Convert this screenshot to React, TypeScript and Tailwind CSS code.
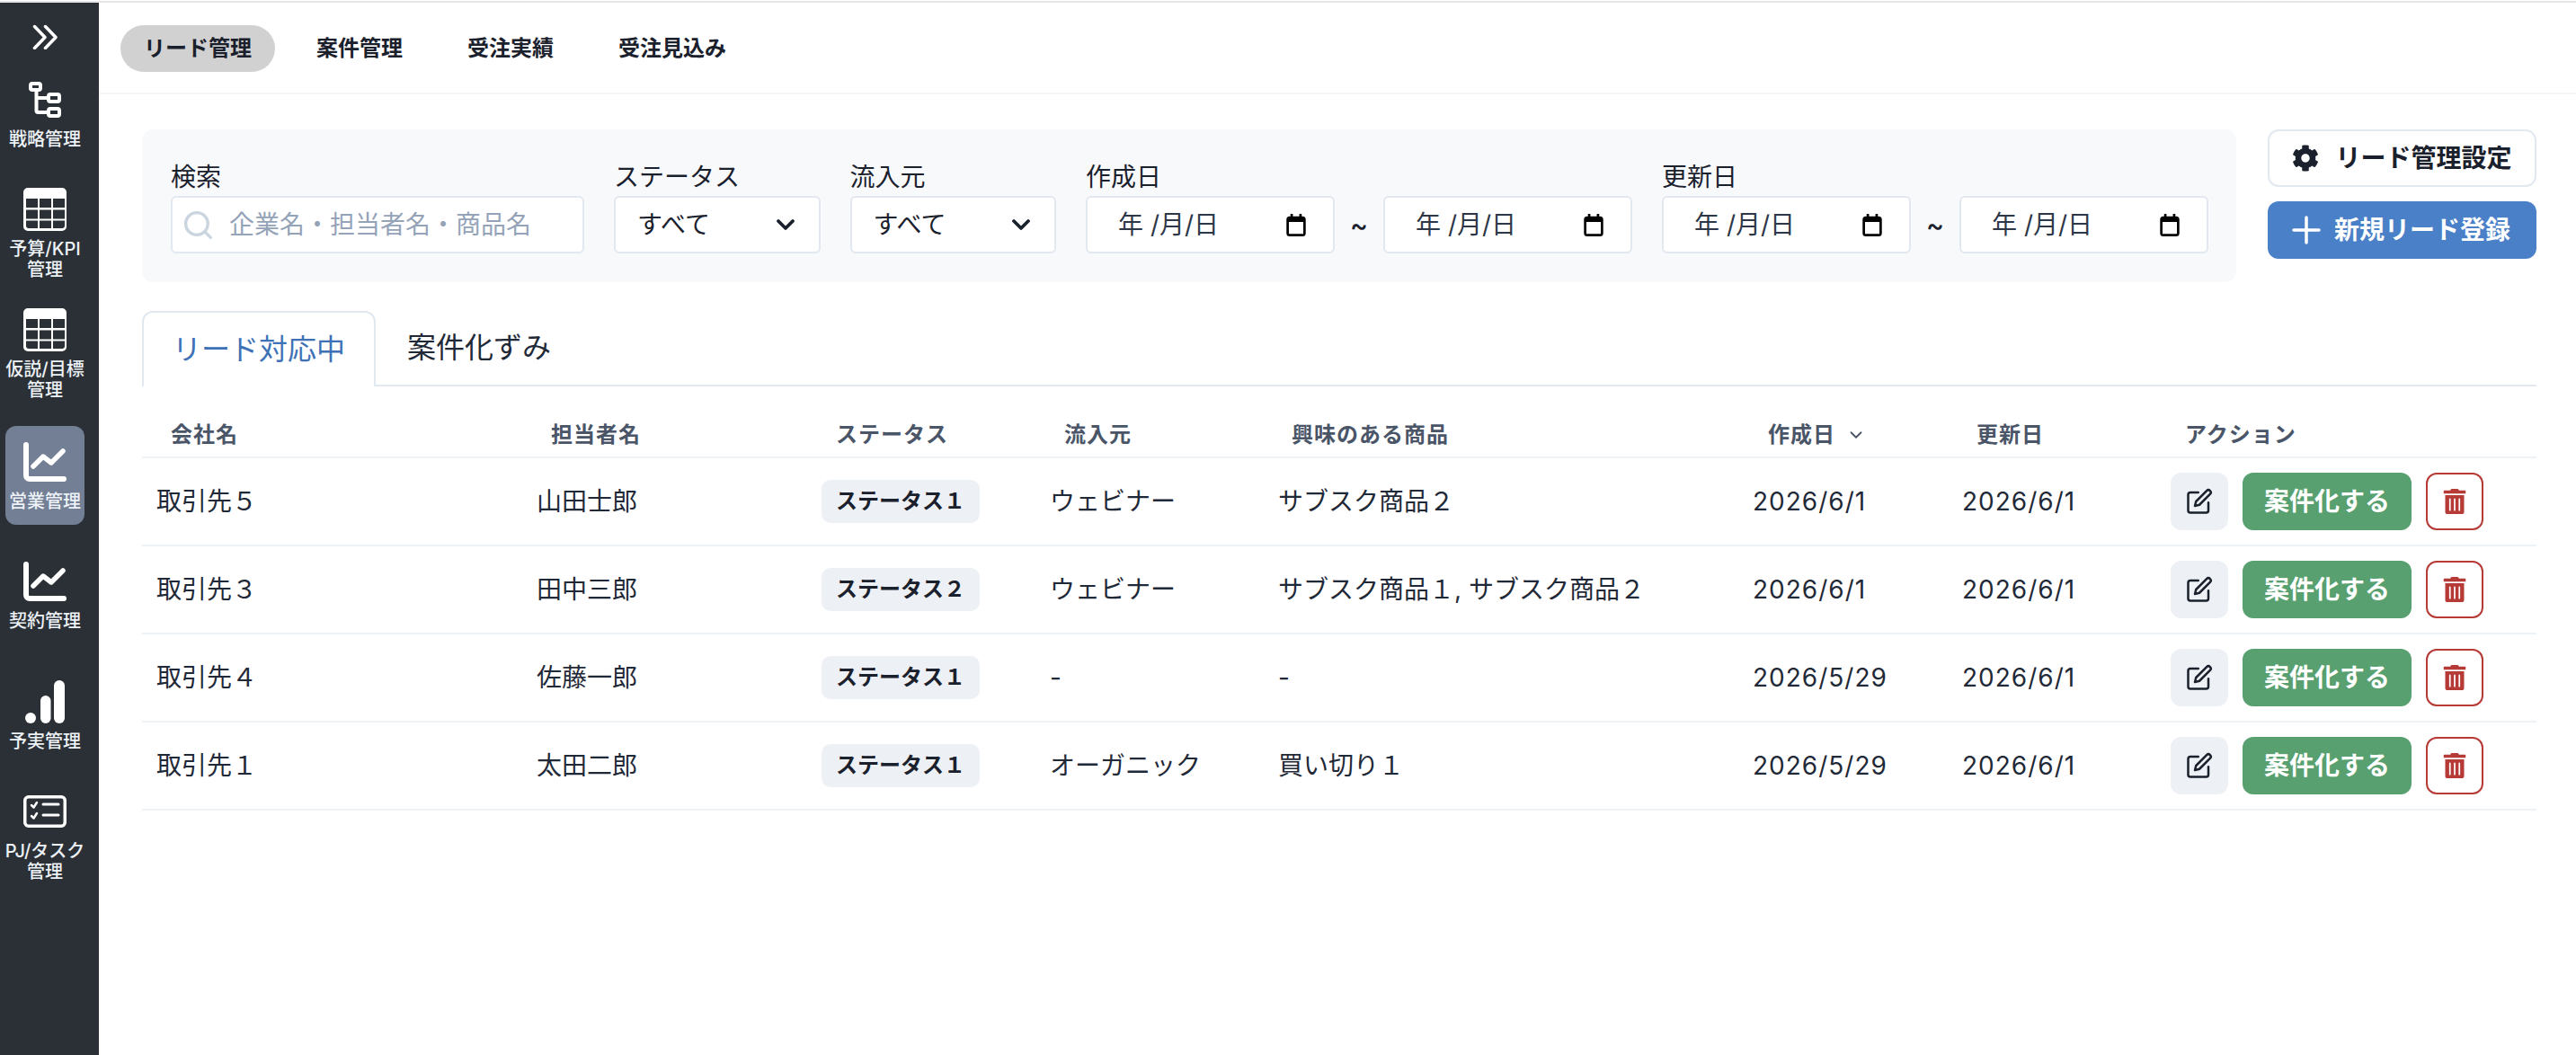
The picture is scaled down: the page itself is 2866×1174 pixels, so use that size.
import { ChevronDown, Plus, Search } from "lucide-react";
import { FaCog, FaTrashAlt } from "react-icons/fa";
import { FiEdit } from "react-icons/fi";

const font = "font-['Inter','Noto_Sans_CJK_JP',sans-serif]";

const CollapseIcon = () => (
  <svg width="28" height="28" viewBox="0 0 28 28" fill="none" stroke="white" strokeWidth="3.500" strokeLinecap="round" strokeLinejoin="round">
    <path d="M2.500 2.500L14 14.500 2.500 26.500M14.500 2.500L26 14.500 14.500 26.500" />
  </svg>
);

const StrategyIcon = () => (
  <svg width="40" height="44" viewBox="0 0 40 44" fill="none" stroke="white" strokeWidth="4" strokeLinejoin="round">
    <rect x="4" y="4" width="11" height="7" rx="2" />
    <rect x="24" y="16" width="12" height="8" rx="2" />
    <rect x="24" y="32" width="12" height="8" rx="2" />
    <path d="M10.500 11v23a2 2 0 0 0 2 2H24M10.500 20H24" />
  </svg>
);

const TableIcon = () => (
  <svg width="48" height="48" viewBox="0 0 48 48">
    <path
      fill="white"
      fillRule="evenodd"
      d="M5 0h38a5 5 0 0 1 5 5v38a5 5 0 0 1-5 5H5a5 5 0 0 1-5-5V5a5 5 0 0 1 5-5zM3 12v10h13V12zm15 0v10h13V12zm15 0v10h13V12zM3 24.500v10h13v-10zm15 0v10h13v-10zm15 0v10h13v-10zM3 36.500V42a3 3 0 0 0 3 3h10v-8.500zm15 0V45h13v-8.500zm15 0V45h10a3 3 0 0 0 3-3v-5.500z"
    />
  </svg>
);

const ChartIcon = () => (
  <svg width="48" height="44" viewBox="0 0 48 44" fill="none" stroke="white" strokeLinecap="round" strokeLinejoin="round">
    <path d="M3 3v34a4 4 0 0 0 4 4h38" strokeWidth="6" />
    <path d="M11 27l11-11 9 7 13-13" strokeWidth="5.500" />
  </svg>
);

const BarsIcon = () => (
  <svg width="48" height="48" viewBox="0 0 48 48" fill="white">
    <circle cx="8" cy="42" r="6" />
    <rect x="19" y="17" width="11.500" height="31" rx="5.750" />
    <rect x="34" y="0" width="12" height="48" rx="6" />
  </svg>
);

const TaskIcon = () => (
  <svg width="48" height="36" viewBox="0 0 48 36" fill="none" stroke="white" strokeLinecap="round" strokeLinejoin="round">
    <rect x="1.750" y="1.750" width="44.500" height="32.500" rx="4" strokeWidth="3.500" />
    <path d="M9 11l2.500 2.500L15 8M9 23l2.500 2.500L15 20" strokeWidth="2.500" />
    <path d="M22 10h17M22 22h17" strokeWidth="3" />
  </svg>
);

const CalendarIcon = () => (
  <svg width="22" height="25" viewBox="0 0 24 28" className="shrink-0">
    <path
      fill="#000"
      fillRule="evenodd"
      d="M5 0h3v3h8V0h3v3h1a4 4 0 0 1 4 4v17a4 4 0 0 1-4 4H4a4 4 0 0 1-4-4V7a4 4 0 0 1 4-4h1zM3 10v14a1 1 0 0 0 1 1h16a1 1 0 0 0 1-1V10z"
    />
  </svg>
);

const nav = [
  { icon: <StrategyIcon />, label: ["戦略管理"], box: "mt-[24px] h-[98px] pt-[8px]" },
  { icon: <TableIcon />, label: ["予算/KPI", "管理"], box: "mt-[24px] h-[122px] pt-[8px]" },
  { icon: <TableIcon />, label: ["仮説/目標", "管理"], box: "mt-[12px] h-[122px] pt-[8px]" },
  { icon: <ChartIcon />, label: ["営業管理"], box: "mt-[17px] h-[110px] pt-[16px] rounded-xl bg-[#737f95]" },
  { icon: <ChartIcon />, label: ["契約管理"], box: "mt-[23px] h-[110px] pt-[16px]" },
  { icon: <BarsIcon />, label: ["予実管理"], box: "mt-[24px] h-[110px] pt-[16px]" },
  { icon: <TaskIcon />, label: ["PJ/タスク", "管理"], box: "mt-[12px] h-[120px] pt-[16px]" },
];

const rows = [
  { company: "取引先５", person: "山田士郎", status: "ステータス１", source: "ウェビナー", product: "サブスク商品２", created: "2026/6/1", updated: "2026/6/1" },
  { company: "取引先３", person: "田中三郎", status: "ステータス２", source: "ウェビナー", product: "サブスク商品１, サブスク商品２", created: "2026/6/1", updated: "2026/6/1" },
  { company: "取引先４", person: "佐藤一郎", status: "ステータス１", source: "-", product: "-", created: "2026/5/29", updated: "2026/6/1" },
  { company: "取引先１", person: "太田二郎", status: "ステータス１", source: "オーガニック", product: "買い切り１", created: "2026/5/29", updated: "2026/6/1" },
];

const FieldLabel = ({ text }: { text: string }) => (
  <p className="h-[42px] text-[28px] leading-[42px] text-[#1a202c]">{text}</p>
);

const SelectBox = () => (
  <div className="flex h-[64px] w-[229.5px] items-center justify-between rounded-[6px] border-2 border-[#e2e8f0] bg-white pl-[24px] pr-[21px] text-[28px] text-[#1a202c]">
    <span>すべて</span>
    <ChevronDown size={32} strokeWidth={2.8} color="#1a202c" />
  </div>
);

const DateBox = () => (
  <div className="flex h-[64px] w-[277px] items-center justify-between rounded-[6px] border-2 border-[#e2e8f0] bg-white pl-[34px] pr-[30px] text-[28px] text-[#2d3748]">
    <span className="whitespace-pre">年 /月/日</span>
    <CalendarIcon />
  </div>
);

const DateRange = ({ label }: { label: string }) => (
  <div>
    <FieldLabel text={label} />
    <div className="flex items-center">
      <DateBox />
      <span className="w-[54px] text-center text-[30px] font-medium text-[#1a202c]">~</span>
      <DateBox />
    </div>
  </div>
);

const App = () => {
  return (
    <div className={`flex h-screen flex-col overflow-hidden bg-white pt-px ${font}`}>
      <div className="flex min-h-0 flex-1 border-t-2 border-[#e5e5e5]">
        <aside className="flex w-[110px] shrink-0 flex-col items-center bg-[#2b3036] pl-[6px] pr-[16px]">
          <div className="mt-[24px] flex h-[28px] items-center justify-center">
            <CollapseIcon />
          </div>
          {nav.map((item) => (
            <div
              key={item.label[0]}
              className={`flex w-[88px] shrink-0 flex-col items-center text-center text-[20px] font-medium leading-[23px] text-[#edf2f7] ${item.box}`}
            >
              <div className="flex h-[48px] items-center justify-center">{item.icon}</div>
              <div className="mt-[9px] whitespace-nowrap">
                {item.label.map((line) => (
                  <p key={line}>{line}</p>
                ))}
              </div>
            </div>
          ))}
        </aside>

        <main className="min-w-0 flex-1">
          <nav className="flex h-[102px] items-start gap-[20px] border-b-2 border-[#f4f5f6] pl-[24px] pt-[25px]">
            <button className="h-[52px] rounded-full bg-[#d1d1d1] px-[26px] text-[24px] font-semibold text-[#1a202c]">リード管理</button>
            <button className="h-[52px] rounded-full px-[26px] text-[24px] font-semibold text-[#1a202c]">案件管理</button>
            <button className="h-[52px] rounded-full px-[26px] text-[24px] font-semibold text-[#1a202c]">受注実績</button>
            <button className="h-[52px] rounded-full px-[26px] text-[24px] font-semibold text-[#1a202c]">受注見込み</button>
          </nav>

          <div className="pl-[48px] pr-[44px] pt-[39px]">
            <div className="flex items-start justify-between">
              <div className="flex h-[170px] w-[2330px] gap-[33px] rounded-[12px] bg-[#f8f9fb] px-[32px] py-[32px]">
                <div>
                  <FieldLabel text="検索" />
                  <div className="flex h-[64px] w-[460px] items-center rounded-[6px] border-2 border-[#e2e8f0] bg-white pl-[10px] text-[28px] text-[#94a3b8]">
                    <Search size={37} strokeWidth={2.2} color="#cbd5e0" className="shrink-0" />
                    <span className="ml-[16px]">企業名・担当者名・商品名</span>
                  </div>
                </div>
                <div>
                  <FieldLabel text="ステータス" />
                  <SelectBox />
                </div>
                <div>
                  <FieldLabel text="流入元" />
                  <SelectBox />
                </div>
                <DateRange label="作成日" />
                <DateRange label="更新日" />
              </div>
              <div className="flex w-[299px] flex-col gap-[16px]">
                <button className="flex h-[64px] items-center justify-center gap-[18px] rounded-[12px] border-2 border-[#e2e8f0] bg-white text-[28px] font-semibold text-[#1a202c]">
                  <FaCog size={30} />
                  リード管理設定
                </button>
                <button className="flex h-[64px] items-center justify-center gap-[17px] rounded-[12px] bg-[#4a80c7] text-[28px] font-semibold text-white">
                  <Plus size={48} strokeWidth={1.75} className="-mx-[10px]" />
                  新規リード登録
                </button>
              </div>
            </div>

            <div className="mt-[32px] flex h-[84px] border-b-2 border-[#e2e8f0]">
              <div className="-mb-[2px] flex h-[84px] w-[260px] items-center justify-center rounded-t-[12px] border-2 border-b-0 border-[#e2e8f0] bg-white text-[32px] text-[#3e71b6]">
                リード対応中
              </div>
              <div className="flex items-center pl-[35px] text-[32px] text-[#1f2937]">案件化ずみ</div>
            </div>

            <table className="w-[2664px] table-fixed border-separate border-spacing-0">
              <colgroup>
                <col className="w-[423px]" />
                <col className="w-[315px]" />
                <col className="w-[254px]" />
                <col className="w-[254px]" />
                <col className="w-[528px]" />
                <col className="w-[233px]" />
                <col className="w-[232px]" />
                <col className="w-[425px]" />
              </colgroup>
              <thead>
                <tr className="text-left text-[24px] tracking-[1px] text-[#4a5568]">
                  <th className="h-[80px] border-b-2 border-[#edf2f7] pb-[6px] pl-[32px] align-bottom font-semibold">会社名</th>
                  <th className="border-b-2 border-[#edf2f7] pb-[6px] pl-[32px] align-bottom font-semibold">担当者名</th>
                  <th className="border-b-2 border-[#edf2f7] pb-[6px] pl-[34px] align-bottom font-semibold">ステータス</th>
                  <th className="border-b-2 border-[#edf2f7] pb-[6px] pl-[34px] align-bottom font-semibold">流入元</th>
                  <th className="border-b-2 border-[#edf2f7] pb-[6px] pl-[33px] align-bottom font-semibold">興味のある商品</th>
                  <th className="border-b-2 border-[#edf2f7] pb-[6px] pl-[35px] align-bottom font-semibold">
                    <span className="inline-flex items-center gap-[12px]">
                      作成日
                      <ChevronDown size={22} strokeWidth={2} />
                    </span>
                  </th>
                  <th className="border-b-2 border-[#edf2f7] pb-[6px] pl-[34px] align-bottom font-semibold">更新日</th>
                  <th className="border-b-2 border-[#edf2f7] pb-[6px] pl-[34px] align-bottom font-semibold">アクション</th>
                </tr>
              </thead>
              <tbody>
                {rows.map((row) => (
                  <tr key={row.company} className="text-[28px] text-[#1f2937]">
                    <td className="h-[98px] border-b-2 border-[#edf2f7] pl-[16px]">{row.company}</td>
                    <td className="border-b-2 border-[#edf2f7] pl-[16px]">{row.person}</td>
                    <td className="border-b-2 border-[#edf2f7] pl-[18px]">
                      <span className="inline-flex h-[48px] w-[176px] items-center justify-center rounded-[10px] bg-[#edf0f5] text-[24px] font-semibold text-[#1a202c]">
                        {row.status}
                      </span>
                    </td>
                    <td className="border-b-2 border-[#edf2f7] pl-[18px]">{row.source}</td>
                    <td className="border-b-2 border-[#edf2f7] pl-[18px]">{row.product}</td>
                    <td className="border-b-2 border-[#edf2f7] pl-[18px] tracking-[1px]">{row.created}</td>
                    <td className="border-b-2 border-[#edf2f7] pl-[18px] tracking-[1px]">{row.updated}</td>
                    <td className="border-b-2 border-[#edf2f7] pl-[18px]">
                      <div className="flex items-center gap-[16px]">
                        <button className="flex h-[64px] w-[64px] items-center justify-center rounded-[12px] bg-[#edf0f5] text-[#1a202c]">
                          <FiEdit size={30} strokeWidth={2} />
                        </button>
                        <button className="h-[64px] w-[188px] rounded-[12px] bg-[#58a070] text-[28px] font-semibold text-white">案件化する</button>
                        <button className="flex h-[64px] w-[64px] items-center justify-center rounded-[12px] border-2 border-[#b63a36] bg-white text-[#b63a36]">
                          <FaTrashAlt size={28} />
                        </button>
                      </div>
                    </td>
                  </tr>
                ))}
              </tbody>
            </table>
          </div>
        </main>
      </div>
    </div>
  );
};

export default App;
